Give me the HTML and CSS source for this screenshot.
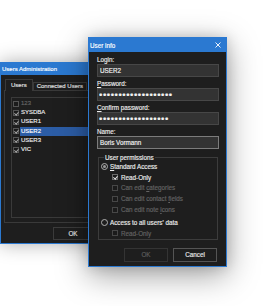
FILE: index.html
```html
<!DOCTYPE html>
<html lang="en">
<head>
    <meta charset="UTF-8">
    <title>User info</title>
    <link rel="stylesheet" href="styles.css">
</head>
<body>
    <div class="desktop">
        <div class="window admin">
            <div class="titlebar">Users Administration</div>
            <div class="admin-body">
                <div class="tabs">
                    <div class="tab active">Users</div>
                    <div class="tab">Connected Users</div>
                </div>
                <div class="tab-panel">
                    <ul class="user-list">
                        <li class="disabled"><span class="check"></span><span class="name">123</span></li>
                        <li><span class="check on"></span><span class="name">SYSDBA</span></li>
                        <li><span class="check on"></span><span class="name">USER1</span></li>
                        <li class="selected"><span class="check on"></span><span class="name">USER2</span></li>
                        <li><span class="check on"></span><span class="name">USER3</span></li>
                        <li><span class="check on"></span><span class="name">VIC</span></li>
                    </ul>
                </div>
                <div class="admin-buttons">
                    <button type="button" class="btn">OK</button>
                </div>
            </div>
        </div>

        <div class="window dialog">
            <div class="titlebar">
                <span>User info</span>
                <svg class="close" width="6" height="6" viewBox="0 0 6 6">
                    <path d="M0.5 0.5L5.5 5.5M5.5 0.5L0.5 5.5" stroke="#fff" stroke-width="0.9"/>
                </svg>
            </div>
            <form class="dialog-body">
                <label class="field-label">Login:</label>
                <input class="field" type="text" value="USER2" readonly>
                <label class="field-label"><u>P</u>assword:</label>
                <input class="field secret" type="password" value="xxxxxxxxxxxxxxxxxxx" readonly>
                <label class="field-label"><u>C</u>onfirm password:</label>
                <input class="field secret" type="password" value="xxxxxxxxxxxxxxxxxx" readonly>
                <label class="field-label">Name:</label>
                <input class="field focused" type="text" value="Boris Vormann" readonly>

                <fieldset class="group">
                    <legend>User permissions</legend>
                    <div class="row"><span class="radio on"></span><span><u>S</u>tandard Access</span></div>
                    <div class="row sub"><span class="check on"></span><span>Read-Only</span></div>
                    <div class="row sub disabled"><span class="check"></span><span>Can edit <u>c</u>ategories</span></div>
                    <div class="row sub disabled"><span class="check"></span><span>Can edit contact <u>f</u>ields</span></div>
                    <div class="row sub disabled"><span class="check"></span><span>Can edit note <u>i</u>cons</span></div>
                    <div class="row gap"><span class="radio"></span><span>Access to all users' data</span></div>
                    <div class="row sub disabled"><span class="check"></span><span>Read-Only</span></div>
                </fieldset>

                <div class="dialog-buttons">
                    <button type="button" class="btn" disabled>OK</button>
                    <button type="button" class="btn default">Cancel</button>
                </div>
            </form>
        </div>
    </div>
</body>
</html>
```

FILE: styles.css
```css
* {
    box-sizing: border-box;
}
body {
    margin: 0;
    background: #fff;
    font-family: "Liberation Sans", Arial, sans-serif;
    font-size: 6.3px;
    color: #ececec;
    -webkit-text-stroke: 0.15px currentColor;
    overflow: hidden;
}
.desktop {
    position: relative;
    width: 265px;
    height: 306px;
}
.window {
    position: absolute;
    display: flex;
    flex-direction: column;
    background: #1e1e1e;
    border: 1px solid #2b79d1;
}
.titlebar {
    flex: none;
    display: flex;
    justify-content: space-between;
    align-items: center;
    background: #2b79d1;
    color: #fff;
}

/* back window */
.admin {
    left: 0;
    top: 62px;
    width: 112px;
    height: 182px;
    border-top: 0;
    font-size: 6px;
    box-shadow: 0 0 18px rgba(0, 0, 0, 0.32);
}
.admin .titlebar {
    height: 13px;
    padding-left: 1px;
}
.admin-body {
    flex: 1;
    display: flex;
    flex-direction: column;
    padding: 4px 0 3px 3px;
}
.tabs {
    display: flex;
    align-items: flex-end;
    height: 11px;
    padding-left: 1px;
}
.tab {
    height: 8px;
    line-height: 7px;
    padding: 0 3px;
    border: 1px solid #3a3a3a;
    border-bottom: 0;
    color: #e0e0e0;
}
.tab.active {
    position: relative;
    z-index: 1;
    height: 12px;
    margin-bottom: -1px;
    line-height: 10px;
    padding: 0 5px;
    background: #1e1e1e;
}
.tab-panel {
    flex: 1;
    display: flex;
    padding: 6px 0 4px 6px;
    border: 1px solid #3a3a3a;
    border-right: 0;
}
.user-list {
    flex: 1;
    margin: 0;
    padding: 1px 0 0 1px;
    list-style: none;
    border: 1px solid #3a3a3a;
    border-right: 0;
}
.user-list li {
    display: flex;
    align-items: center;
    height: 9.2px;
}
.user-list .check {
    margin-right: 1px;
    border-color: #555;
}
.user-list .check.on::after {
    border-color: #a8a8a8;
}
.user-list .name {
    flex: 1;
    padding-left: 1px;
    line-height: 9px;
}
.user-list .selected .name {
    background: #2c5da6;
    color: #fff;
}
.user-list .disabled {
    color: #666;
}
.admin-buttons {
    display: flex;
    padding: 4px 0 0 49px;
}
.admin-buttons .btn {
    width: 40px;
    height: 13px;
}

/* front dialog */
.dialog {
    left: 88px;
    top: 37px;
    width: 139px;
    z-index: 2;
    box-shadow: 0 8px 30px rgba(0, 0, 0, 0.38), 0 0 12px rgba(0, 0, 0, 0.15);
}
.dialog .titlebar {
    height: 14px;
    padding: 0 5px 0 1px;
}
.close {
    display: block;
}
.dialog-body {
    display: flex;
    flex-direction: column;
    margin: 0;
    padding: 3px 7px 4px 8px;
}
.field-label {
    height: 9px;
    line-height: 9px;
}
.field {
    height: 13px;
    margin: 0 0 2px;
    padding: 0 2px;
    background: #333;
    border: 1px solid #474747;
    color: #f2f2f2;
    font-family: "Liberation Sans", Arial, sans-serif;
    font-size: 6.3px;
    -webkit-text-stroke: 0.15px currentColor;
    outline: none;
}
.field.secret {
    font-size: 9.5px;
    letter-spacing: 0.55px;
    padding-left: 1px;
}
.field.focused {
    border-color: #7c7c7c;
}
.group {
    margin: 3px 1px 0;
    padding: 0 0 0 2px;
    min-width: 0;
    border: 1px solid #3c3c3c;
}
.group legend {
    margin-left: 3px;
    padding: 0 1px;
    line-height: 7px;
}
.row {
    display: flex;
    align-items: center;
    gap: 2px;
    height: 10.8px;
}
.row.sub {
    padding-left: 11px;
    gap: 3px;
}
.row.gap {
    margin-top: 2px;
}
.row.disabled {
    color: #646464;
}
.check {
    position: relative;
    flex: none;
    width: 6px;
    height: 6px;
    border: 1px solid #6c6c6c;
    background: #1b1b1b;
}
.check.on::after {
    content: "";
    position: absolute;
    left: 1.3px;
    top: 0;
    width: 1.5px;
    height: 3px;
    border: solid #e6e6e6;
    border-width: 0 0.8px 0.8px 0;
    transform: rotate(40deg);
}
.row.disabled .check {
    border-color: #474747;
}
.radio {
    position: relative;
    flex: none;
    width: 7px;
    height: 7px;
    border: 1px solid #b0b0b0;
    border-radius: 50%;
}
.radio.on::after {
    content: "";
    position: absolute;
    left: 1px;
    top: 1px;
    width: 3px;
    height: 3px;
    border-radius: 50%;
    background: #9a9a9a;
}
.dialog-buttons {
    display: flex;
    justify-content: flex-end;
    gap: 5px;
    margin-top: 8px;
    padding-right: 2px;
}
.dialog-buttons .btn {
    width: 44px;
    height: 14px;
}
.btn {
    padding: 0;
    background: #1e1e1e;
    border: 1px solid #3c3c3c;
    color: #e8e8e8;
    font-family: "Liberation Sans", Arial, sans-serif;
    font-size: 6.3px;
    -webkit-text-stroke: 0.15px currentColor;
}
.btn:disabled {
    color: #5e5e5e;
    border-color: #343434;
}
.btn.default {
    border-color: #555;
}
```
